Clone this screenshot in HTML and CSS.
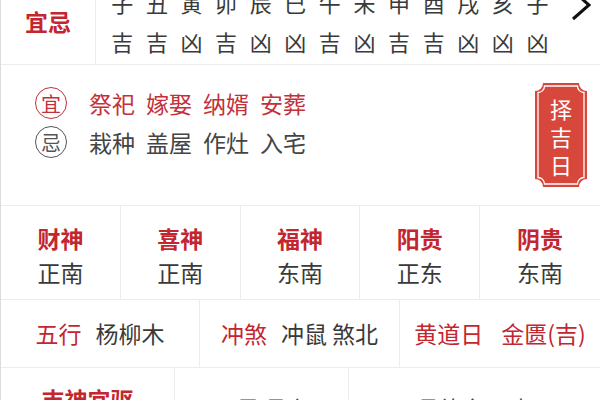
FILE: index.html
```html
<!DOCTYPE html>
<html lang="zh-CN">
<head>
<meta charset="utf-8">
<link rel="stylesheet" href="styles.css">
</head>
<body>
<div class="page">
  <div class="top-row">
    <div class="top-label">宜忌</div>
    <div class="branches">
      <span>子</span><span>丑</span><span>寅</span><span>卯</span><span>辰</span><span>巳</span><span>午</span><span>未</span><span>申</span><span>酉</span><span>戌</span><span>亥</span><span>子</span>
      <span>吉</span><span>吉</span><span>凶</span><span>吉</span><span>凶</span><span>凶</span><span>吉</span><span>凶</span><span>吉</span><span>吉</span><span>凶</span><span>凶</span><span>凶</span>
    </div>
    <svg class="chevron" width="20" height="36" viewBox="0 0 20 36"><path d="M2 4 L18 18 L2 32" fill="none" stroke="#111" stroke-width="3"/></svg>
  </div>

  <div class="yiji">
    <div class="yiji-list">
      <div class="yiji-line good">
        <span class="ring">宜</span>
        <span class="word">祭祀</span><span class="word">嫁娶</span><span class="word">纳婿</span><span class="word">安葬</span>
      </div>
      <div class="yiji-line bad">
        <span class="ring">忌</span>
        <span class="word">栽种</span><span class="word">盖屋</span><span class="word">作灶</span><span class="word">入宅</span>
      </div>
    </div>
    <div class="badge">
      <svg class="badge-bg" width="52" height="104" viewBox="0 0 52 104">
        <path d="M8 0 H44 A8 8 0 0 0 52 8 V96 A8 8 0 0 0 44 104 H8 A8 8 0 0 0 0 96 V8 A8 8 0 0 0 8 0 Z" fill="#d8473b"/>
        <path d="M9.5 3 H42.5 A6.5 6.5 0 0 0 49 9.5 V94.5 A6.5 6.5 0 0 0 42.5 101 H9.5 A6.5 6.5 0 0 0 3 94.5 V9.5 A6.5 6.5 0 0 0 9.5 3 Z" fill="none" stroke="#fff" stroke-width="1.3"/>
      </svg>
      <span class="badge-text">择<br>吉<br>日</span>
    </div>
  </div>

  <div class="gods">
    <div class="god"><div class="god-name">财神</div><div class="god-dir">正南</div></div>
    <div class="god"><div class="god-name">喜神</div><div class="god-dir">正南</div></div>
    <div class="god"><div class="god-name">福神</div><div class="god-dir">东南</div></div>
    <div class="god"><div class="god-name">阳贵</div><div class="god-dir">正东</div></div>
    <div class="god"><div class="god-name">阴贵</div><div class="god-dir">东南</div></div>
  </div>

  <div class="facts">
    <div class="fact"><span class="fact-label">五行</span><span class="fact-value">杨柳木</span></div>
    <div class="fact"><span class="fact-label">冲煞</span><span class="fact-value">冲鼠 煞北</span></div>
    <div class="fact"><span class="fact-label">黄道日</span><span class="fact-value red">金匮(吉)</span></div>
  </div>

  <div class="spirits">
    <div class="spirit-label">吉神宜驱</div>
    <div class="spirit-value">天恩 母仓</div>
    <div class="spirit-value">月德合 天喜</div>
  </div>
</div>
</body>
</html>
```

FILE: styles.css
```css
* { box-sizing: border-box; }
html, body { margin: 0; padding: 0; background: #fff; }
body {
  font-family: "Noto Sans CJK SC", "Noto Sans", sans-serif;
  color: #333;
  overflow: hidden;
}
.page {
  width: 600px;
  border-left: 1px solid #dcdcdc;
  min-height: 400px;
}

/* top row */
.top-row {
  display: flex;
  height: 89px;
  margin-top: -24px;
  border-bottom: 1px solid #ececec;
}
.top-label {
  width: 95px;
  flex: none;
  border-right: 1px solid #ececec;
  display: flex;
  align-items: center;
  justify-content: center;
  color: #c3262f;
  font-size: 23px;
  font-weight: 700;
  padding-top: 1px;
}
.branches {
  display: grid;
  grid-template-columns: repeat(13, 34.6px);
  padding-left: 9px;
  padding-top: 11px;
  font-size: 22px;
  line-height: 30px;
  color: #3a3a3a;
  text-align: center;
}
.chevron {
  flex: none;
  margin-left: 16px;
  margin-top: 11px;
}

/* yi ji */
.yiji {
  display: flex;
  align-items: center;
  justify-content: space-between;
  height: 141px;
  border-bottom: 1px solid #ececec;
}
.yiji-list {
  align-self: flex-start;
  padding-top: 20px;
  padding-left: 34px;
  display: flex;
  flex-direction: column;
  gap: 3px;
}
.yiji-line {
  display: flex;
  align-items: center;
  height: 36px;
  font-size: 23px;
}
.ring {
  width: 32px;
  height: 32px;
  border-radius: 50%;
  border: 1.5px solid currentColor;
  display: flex;
  align-items: center;
  justify-content: center;
  font-size: 20px;
  margin-right: 22px;
}
.word { margin-right: 11px; }
.good { color: #c3303a; }
.bad { color: #444; }
.bad .ring { color: #555; }

.badge {
  position: relative;
  width: 52px;
  height: 104px;
  margin-right: 13px;
  display: flex;
  align-items: center;
  justify-content: center;
}
.badge-bg { position: absolute; left: 0; top: 0; }
.badge-text {
  position: relative;
  color: #fff;
  font-size: 22px;
  line-height: 28px;
  text-align: center;
  padding-top: 2px;
}

/* gods */
.gods {
  display: grid;
  grid-template-columns: repeat(5, 1fr);
  height: 94px;
  border-bottom: 1px solid #ececec;
}
.god {
  border-right: 1px solid #ececec;
  text-align: center;
  padding-top: 15px;
  line-height: 34px;
  font-size: 23px;
}
.god:last-child { border-right: none; }
.god-name { color: #c3262f; font-weight: 700; }
.god-dir { color: #3a3a3a; }

/* facts */
.facts {
  display: grid;
  grid-template-columns: 199px 200px 200px;
  height: 68px;
  border-bottom: 1px solid #ececec;
}
.fact {
  display: flex;
  align-items: center;
  justify-content: center;
  gap: 14px;
  font-size: 23px;
  border-right: 1px solid #ececec;
  padding-bottom: 1px;
}
.fact:last-child { border-right: none; gap: 18px; }
.fact-label { color: #c3262f; }
.fact-value { color: #3a3a3a; }
.fact-value.red { color: #c3262f; }

/* spirits */
.spirits {
  display: grid;
  grid-template-columns: 174px 174px 1fr;
  height: 80px;
}
.spirit-label {
  border-right: 1px solid #ececec;
  color: #c3262f;
  font-size: 23px;
  font-weight: 700;
  text-align: center;
  padding-top: 16px;
  line-height: 30px;
}
.spirit-value {
  border-right: 1px solid #ececec;
  color: #444;
  font-size: 22px;
  text-align: center;
  padding-top: 24px;
  line-height: 30px;
}
.spirit-value:last-child { border-right: none; }
```
